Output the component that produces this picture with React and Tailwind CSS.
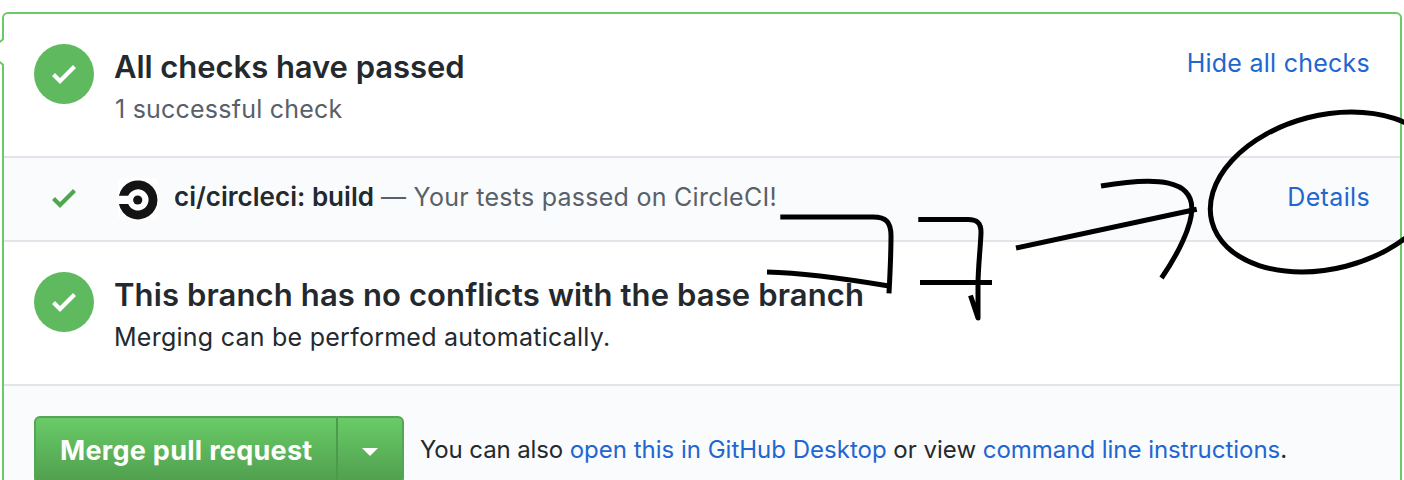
import React from "react";

const link = "text-[#2166d1]";

function Check({ className }) {
  return (
    <svg viewBox="0 0 12 16" className={`h-8 w-6 ${className}`} fill="currentColor">
      <path fillRule="evenodd" d="M12 5l-8 8-4-4 1.5-1.5L4 10l6.5-6.5L12 5z" />
    </svg>
  );
}

function StatusDot() {
  return (
    <div className="mr-5 flex size-[60px] shrink-0 items-center justify-center rounded-full bg-[#5fb95e]">
      <Check className="text-white" />
    </div>
  );
}

function CircleCiLogo() {
  return (
    <svg viewBox="0 0 40 42" className="h-[42px] w-10 shrink-0">
      <rect width="40" height="42" rx="5" fill="#fff" />
      <path
        fill="#141414"
        d="M.9 17.8A19.5 19.5 0 1 1 .9 26H10.2A10.6 10.6 0 1 0 10.2 17.8Z"
      />
      <circle cx="19.7" cy="22" r="4.6" fill="#141414" />
    </svg>
  );
}

function Caret() {
  return (
    <svg className="absolute top-[36px] left-0 h-8 w-2" viewBox="0 0 8 32" fill="none">
      <path d="M0 4H8V28H0Z" fill="#fff" />
      <path d="M3 0V2.2Q3 3.2 2.2 4L-1 6.6M3 32V29.8Q3 28.8 2.2 28L-1 25.4" stroke="#6cc968" strokeWidth="2" />
    </svg>
  );
}

function Annotations() {
  return (
    <svg
      className="pointer-events-none absolute inset-0 h-[480px] w-[1404px]"
      viewBox="0 0 1404 480"
      fill="none"
      stroke="#000"
      strokeWidth="5"
      strokeLinejoin="round"
    >
      <path d="M780.3 217H873C886 217 891 222 891 236C891 256 890 274 889 293.3" />
      <path d="M767 272C806 273 847 279 889 286" />
      <path d="M918.3 219.5H968C977 219.5 981.2 223 981 233C980.3 250 978 268 978 285V318L970.5 295.5" />
      <path d="M920 282.4H992" />
      <path d="M1016 248L1196.7 209.3" />
      <path d="M1101 186C1160 176 1191.5 181 1191.8 208C1192 226 1178 254 1161.5 278" />
      <ellipse cx="1326.7" cy="192" rx="118.6" ry="76.7" transform="rotate(-14.5 1326.7 192)" />
    </svg>
  );
}

export default function App() {
  return (
    <div className="relative h-[480px] w-[1404px] overflow-hidden bg-white pl-0.5 pt-3 font-['Inter',sans-serif] text-[#24292e]">
      <div className="h-[520px] w-[1400px] overflow-hidden rounded-md border-2 border-[#6cc968] bg-white">
        <div className="flex h-[142px] items-start px-[30px] pt-[30px]">
          <StatusDot />
          <div className="flex-1">
            <h3 className="text-[31px] leading-[46px] font-semibold tracking-[-0.055px]">All checks have passed</h3>
            <p className="pl-px text-[25px] leading-[38px] tracking-[0.22px] text-[#586069]">1 successful check</p>
          </div>
          <a className={`text-[25px] leading-[38px] tracking-[0.25px] ${link}`}>Hide all checks</a>
        </div>

        <div className="flex h-[84px] items-center border-t-2 border-[#e1e4e8] bg-[#fafbfc] px-[30px]">
          <div className="flex w-[60px] justify-center pb-0.5">
            <Check className="text-[#4fa64f]" />
          </div>
          <div className="mr-4 ml-6 flex">
            <CircleCiLogo />
          </div>
          <div className="flex-1 pb-1 text-[25px] leading-[38px] whitespace-pre text-[#586069]">
            <span className="inline-block w-[207px] text-[26px] font-semibold tracking-[0.02px] text-[#24292e]">ci/circleci: build</span>
            <span className="tracking-[0.27px]">— Your tests passed on CircleCI!</span>
          </div>
          <a className={`pb-1 text-[25px] leading-[38px] tracking-[0.35px] ${link}`}>Details</a>
        </div>

        <div className="flex h-[144px] items-start border-t-2 border-[#e1e4e8] px-[30px] pt-[30px]">
          <StatusDot />
          <div>
            <h3 className="text-[31px] leading-[46px] font-semibold tracking-[0.12px]">
              This branch has no conflicts with the base branch
            </h3>
            <p className="text-[25px] leading-[38px] tracking-[0.25px]">Merging can be performed automatically.</p>
          </div>
        </div>

        <div className="flex h-40 items-start border-t-2 border-[#e1e4e8] bg-[#fafbfc] px-[30px] pt-[30px]">
          <div className="flex h-[68px] w-[370px] rounded-md border-2 border-[#54a556] bg-linear-to-b from-[#69cb67] to-[#509f4e] text-white">
            <button className="w-[302px] border-r-2 border-[#4c9a4c] pt-0.5 pl-[24px] text-left text-[27px] font-bold tracking-[0.29px]">
              Merge pull request
            </button>
            <button className="flex flex-1 items-center justify-center">
              <svg viewBox="0 0 16 8" className="mt-1 h-2 w-4" fill="currentColor">
                <path d="M0 0H16L8 8Z" />
              </svg>
            </button>
          </div>
          <p className="ml-4 text-[24px] leading-[67px] whitespace-nowrap">
            <span className="tracking-[-0.12px]">You can also </span>
            <a className={link}>open this in GitHub Desktop</a> or view{" "}
            <a className={`tracking-[-0.03px] ${link}`}>command line instructions</a>.
          </p>
        </div>
      </div>
      <Caret />
      <Annotations />
    </div>
  );
}
